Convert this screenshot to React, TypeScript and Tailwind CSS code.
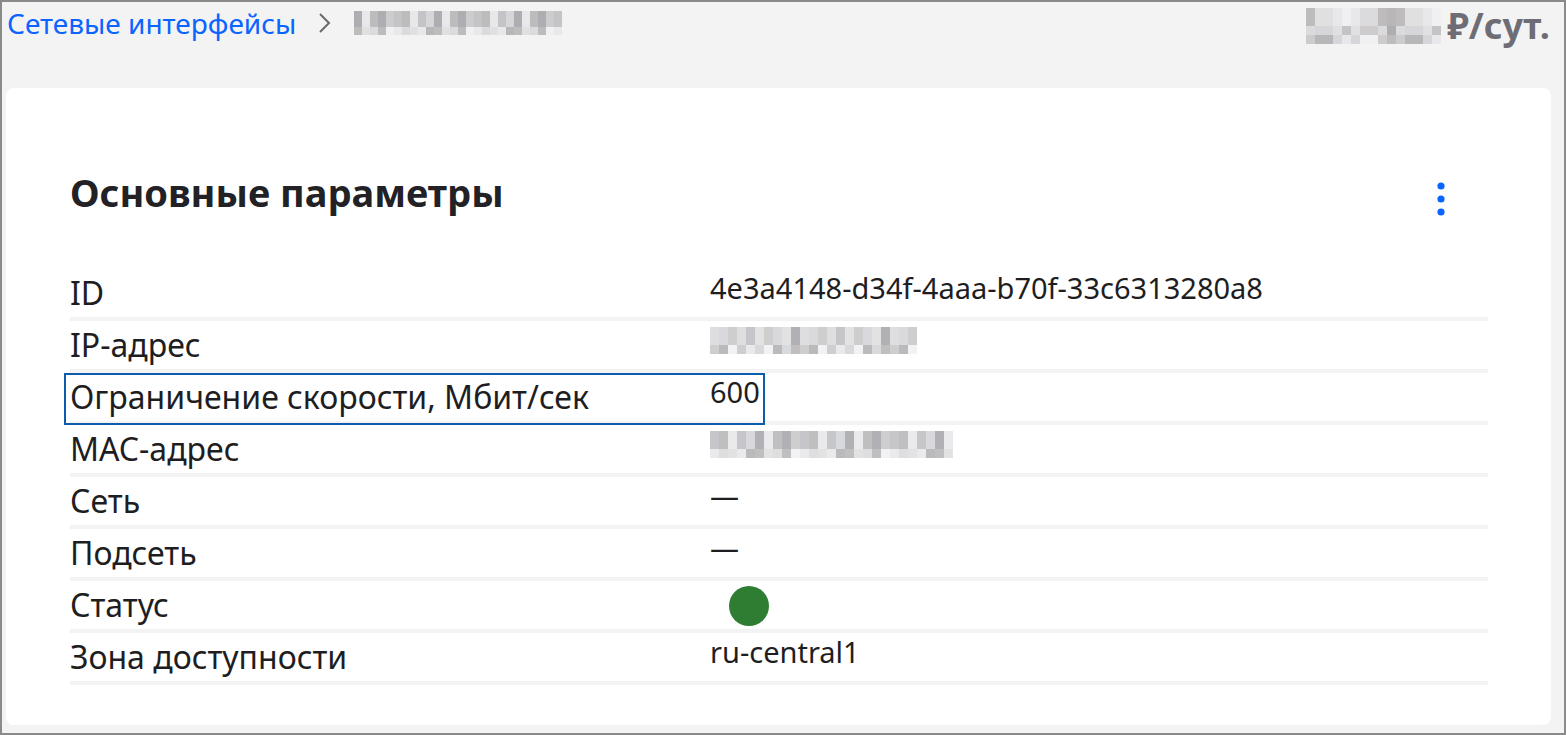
type Row = { label: string; value?: string; kind?: 'text' | 'blur' | 'dot' | 'dash'; seed?: number; cols?: number; focus?: boolean };

const rows: Row[] = [
  { label: 'ID', value: '4e3a4148-d34f-4aaa-b70f-33c6313280a8' },
  { label: 'IP-адрес', kind: 'blur', seed: 3, cols: 23 },
  { label: 'Ограничение скорости, Мбит/сек', value: '600', focus: true },
  { label: 'MAC-адрес', kind: 'blur', seed: 7, cols: 27 },
  { label: 'Сеть', kind: 'dash' },
  { label: 'Подсеть', kind: 'dash' },
  { label: 'Статус', kind: 'dot' },
  { label: 'Зона доступности', value: 'ru-central1' },
];

const greys = ['#b9b9bd', '#d6d6d9', '#a9a9ad', '#e6e6e8', '#c4c2c2', '#9e9ea3', '#dcdcdc', '#f0f0f2', '#b1aeb0', '#cfd0d4'];

// pixelated placeholder for hidden values
function Mosaic({ cols, rows = 3, cell = 9, seed = 1 }: { cols: number; rows?: number; cell?: number; seed?: number }) {
  const cells = [];
  for (let r = 0; r < rows; r++) {
    for (let c = 0; c < cols; c++) {
      const n = (c * 7 + r * 13 + seed * 5 + ((c * c + seed) % 5)) % greys.length;
      const colour = r === 0 ? greys[(n + 3) % greys.length] : greys[n];
      cells.push(<div key={`${r}-${c}`} style={{ backgroundColor: colour, width: cell, height: cell }} />);
    }
  }
  return (
    <div className="grid opacity-80" style={{ gridTemplateColumns: `repeat(${cols}, ${cell}px)` }}>
      {cells}
    </div>
  );
}

export default function App() {
  return (
    <main className="h-[735px] w-[1566px] bg-[#f3f3f3] border-2 border-[#8a8a8a] overflow-hidden font-['Noto_Sans',sans-serif]">
      {/* Header */}
      <header className="flex items-start justify-between h-[86px] pl-[5px] pr-[14px]">
        <div className="flex items-center gap-[22px] pt-[3px]">
          <a className="text-[28px] leading-[36px] text-[#0a64ff]">Сетевые интерфейсы</a>
          <svg width="14" height="22" viewBox="0 0 14 22" className="text-[#6b6b6b]">
            <path d="M2 2l9 9-9 9" fill="none" stroke="currentColor" strokeWidth="2" />
          </svg>
          <Mosaic cols={26} cell={8} seed={2} />
        </div>
        <div className="flex items-center gap-[6px] pt-[1px]">
          <Mosaic cols={15} rows={4} cell={9} seed={5} />
          <span className="text-[36px] leading-[46px] font-bold text-[#6e6d75]">₽/сут.</span>
        </div>
      </header>

      {/* Card */}
      <section className="ml-[4px] mr-[13px] h-[637px] rounded-[8px] bg-white pl-[64px] pr-[63px] pt-[80px]">
        <div className="flex items-center justify-between h-[48px]">
          <h1 className="text-[38px] font-bold text-[#222226]">Основные параметры</h1>
          <svg width="8" height="34" viewBox="0 0 8 34" className="mr-[43px] mt-[14px] text-[#0a64ff]">
            <circle cx="4" cy="4" r="3.6" fill="currentColor" />
            <circle cx="4" cy="17" r="3.6" fill="currentColor" />
            <circle cx="4" cy="30" r="3.6" fill="currentColor" />
          </svg>
        </div>

        <div className="mt-[53px]">
          {rows.map((row) => (
            <div key={row.label} className="relative flex h-[52px] border-b-[4px] border-[#f3f3f3]">
              {row.focus && <div className="absolute -left-[6px] top-[0px] w-[701px] h-[52px] border-2 border-[#0b5cad]" />}
              <div className="w-[640px] text-[32px] leading-[48px] text-[#1e1e22]">{row.label}</div>
              <div className="flex items-center h-[38px] text-[29px] text-[#1e1e22]">
                {(!row.kind || row.kind === 'text') && <span>{row.value}</span>}
                {row.kind === 'dash' && <span>—</span>}
                {row.kind === 'blur' && <Mosaic cols={row.cols!} seed={row.seed} />}
                {row.kind === 'dot' && <span className="ml-[19px] mt-[11px] w-[40px] h-[40px] rounded-full bg-[#2e7d32]" />}
              </div>
            </div>
          ))}
        </div>
      </section>
    </main>
  );
}
